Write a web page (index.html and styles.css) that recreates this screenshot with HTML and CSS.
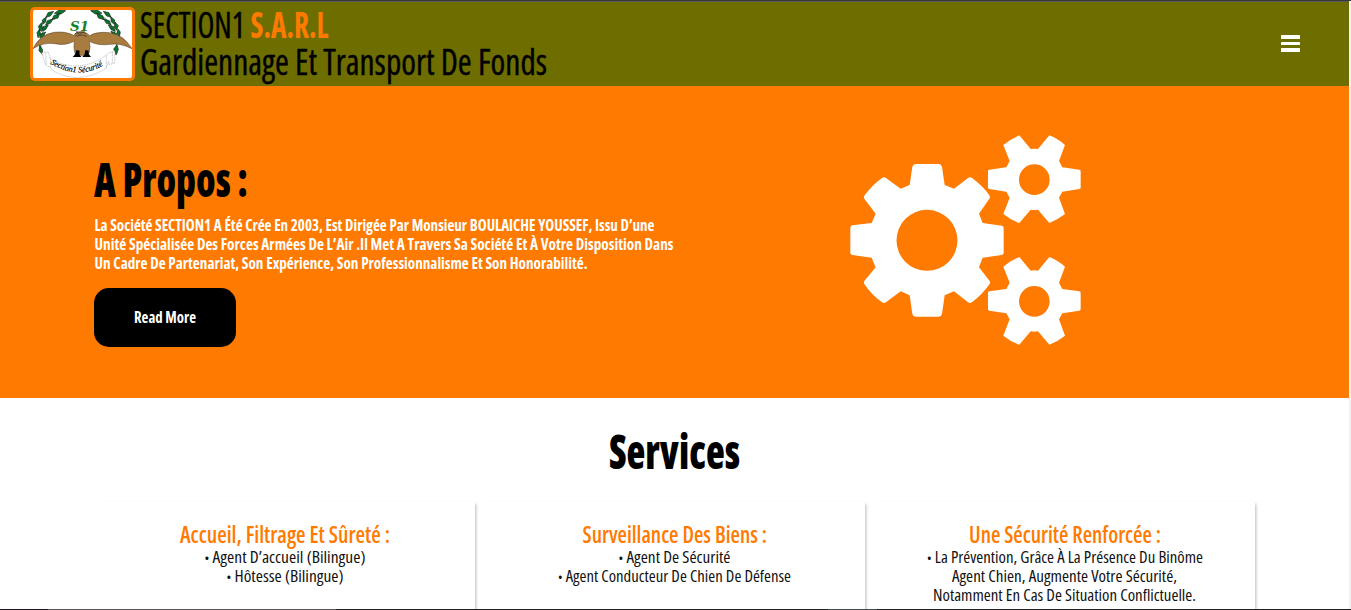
FILE: index.html
```html
<!DOCTYPE html>
<html lang="fr">
<head>
<meta charset="utf-8">
<title>Section1 S.A.R.L</title>
<link rel="stylesheet" href="styles.css">
</head>
<body>
<div class="page">
  <header class="header">
    <div class="brand">
      <svg class="logo" viewBox="24 30 297 204" preserveAspectRatio="none">
        <g class="laurel">
          <path d="M120 33Q62 55 48 112Q44 140 52 164M199 33Q254 50 269 98Q279 130 272 164"/>
        </g>
        <g class="leaves">
          <path d="M122 32l-20-2-14 10 20 2zM104 40l-5 14-17 5 4-12zM86 34l-10 14-13 4 6-14zM84 57l-8 13-14 5 5-13zM64 50l-2 16-9 7-1-13zM70 75l-8 14-13 5 5-14zM50 68l2 16-7 9-5-14zM62 96l-6 13-12 4 4-12zM43 88l4 15-8 10-3-15zM44 136l8 12 2 17-12-13z"/>
          <path d="M197 32l20-2 14 10-20 2zM215 40l5 14 17 5-4-12zM235 34l10 14 13 4-6-14zM236 57l8 13 14 5-5-13zM257 50l2 16 9 7 1-13zM250 75l8 14 13 5-5-14zM270 66l-2 16 7 9 5-14zM258 94l6 13 12 4-4-12zM279 87l-4 14 8 10 3-15zM276 134l-10 13 8 17 6-16z"/>
        </g>
        <text class="logo-mark" x="135" y="94" textLength="57" lengthAdjust="spacingAndGlyphs">S1</text>
        <path class="eagle" d="M24 146Q45 103 88 97Q125 93 147 107L153 99Q170 91 184 99L194 107Q215 94 253 98Q295 103 321 146Q285 128 256 133Q218 138 193 124L195 140Q194 160 188 166H152Q146 150 147 138L148 124Q120 138 90 131Q55 126 24 146Z"/>
        <path class="crest" d="M147 104l8-6 10 5 8-7 10 6M158 100l-4-5 18 2 8-4M151 108l20-3 14 4"/>
        <path class="claws" d="M154 150l10 2-1 11 6 8h-26l8-9zM181 150l10 2v10l7 9h-26l7-8z"/>
        <path class="ribbon" d="M50 158L70 156 76 176Q160 224 241 167L253 158 270 153 269 190 252 193 251 184 244 204Q164 256 85 213L77 203 62 195ZM76 176L77 203M244 166L244 204M62 160L64 195M262 156L262 191"/>
        <path id="ribbon-curve" class="guide" d="M76 190Q163 246 246 189"/>
        <text class="logo-name"><textPath href="#ribbon-curve" textLength="168" lengthAdjust="spacingAndGlyphs">Section1 Sécurité</textPath></text>
      </svg>
      <div class="brand-text">
        <svg class="line brand-line"><text x="-1" y="30.500" textLength="105" lengthAdjust="spacingAndGlyphs">SECTION1</text><text class="accent" x="109.500" y="30.500" textLength="78" lengthAdjust="spacingAndGlyphs">S.A.R.L</text></svg>
        <svg class="line brand-line"><text x="-1" y="30.500" textLength="407" lengthAdjust="spacingAndGlyphs">Gardiennage Et Transport De Fonds</text></svg>
      </div>
    </div>
    <div class="menu"><span></span><span></span><span></span></div>
  </header>

  <section class="hero">
    <div class="about">
      <svg class="line heading"><text x="0" y="41" textLength="154" lengthAdjust="spacingAndGlyphs">A Propos :</text></svg>
      <div class="about-text">
        <svg class="line body-line"><text x="0.500" y="15" textLength="560" lengthAdjust="spacingAndGlyphs">La Société SECTION1 A Été Crée En 2003, Est Dirigée Par Monsieur BOULAICHE YOUSSEF, Issu D’une</text></svg>
        <svg class="line body-line"><text x="0.500" y="15" textLength="579" lengthAdjust="spacingAndGlyphs">Unité Spécialisée Des Forces Armées De L’Air .Il Met A Travers Sa Société Et À Votre Disposition Dans</text></svg>
        <svg class="line body-line"><text x="0.500" y="15" textLength="493" lengthAdjust="spacingAndGlyphs">Un Cadre De Partenariat, Son Expérience, Son Professionnalisme Et Son Honorabilité.</text></svg>
      </div>
      <div class="button"><svg class="line button-label"><text x="0" y="15" textLength="62" lengthAdjust="spacingAndGlyphs">Read More</text></svg></div>
    </div>
    <svg class="gears" viewBox="0 0 750 690">
      <path fill-rule="evenodd" d="M209 180L217 125Q219 117 227 117H296Q304 117 306 125L314 180 342 191 384 159Q390 155 396 159Q430 184 449 212Q451 216 448 221L417 266 428 294 485 302Q491 303 491 308V385Q491 389 485 390L428 398 417 427 449 468Q452 472 449 477Q427 508 396 532Q390 536 384 532L342 499 314 511 306 567Q304 575 296 575H227Q219 575 217 567L209 511 182 499 138 532Q132 536 126 532Q94 509 73 477Q70 473 73 468L107 427 95 398 37 390Q31 389 31 384V309Q31 303 37 301L95 294 107 266 73 221Q70 217 73 212Q97 180 126 159Q132 155 138 159L182 191ZM261 254.500A91.500 91.500 0 0 0 261 437.500A91.500 91.500 0 0 0 261 254.500Z"/>
      <path id="small-gear" fill-rule="evenodd" d="M444 138Q444 135 448 134L499 127 509 108 490 60Q512 42 538 31L572 72Q583 70 594 72L628 31Q652 40 675 60L657 108 667 127 718 134Q722 135 722 138V188Q722 191 718 192L667 200 657 218 675 267Q652 285 628 294L594 254Q583 256 572 254L538 294Q512 285 490 267L509 218 499 200 448 192Q444 191 444 188ZM583 118A46 46 0 0 0 583 210A46 46 0 0 0 583 118Z"/>
      <use href="#small-gear" y="365"/>
    </svg>
  </section>

  <section class="services">
    <svg class="line services-title"><text x="0" y="41.500" textLength="131" lengthAdjust="spacingAndGlyphs">Services</text></svg>
    <div class="cards">
      <div class="card">
        <svg class="line card-title"><text x="85" y="24" textLength="210" lengthAdjust="spacingAndGlyphs">Accueil, Filtrage Et Sûreté :</text></svg>
        <svg class="line item"><text x="109.500" y="15" textLength="161" lengthAdjust="spacingAndGlyphs"><tspan class="bullet">•</tspan> Agent D’accueil (Bilingue)</text></svg>
        <svg class="line item"><text x="131.500" y="15" textLength="117" lengthAdjust="spacingAndGlyphs"><tspan class="bullet">•</tspan> Hôtesse (Bilingue)</text></svg>
      </div>
      <div class="card">
        <svg class="line card-title"><text x="97.500" y="24" textLength="184.500" lengthAdjust="spacingAndGlyphs">Surveillance Des Biens :</text></svg>
        <svg class="line item"><text x="133.500" y="15" textLength="112" lengthAdjust="spacingAndGlyphs"><tspan class="bullet">•</tspan> Agent De Sécurité</text></svg>
        <svg class="line item"><text x="73" y="15" textLength="233" lengthAdjust="spacingAndGlyphs"><tspan class="bullet">•</tspan> Agent Conducteur De Chien De Défense</text></svg>
      </div>
      <div class="card">
        <svg class="line card-title"><text x="94" y="24" textLength="192" lengthAdjust="spacingAndGlyphs">Une Sécurité Renforcée :</text></svg>
        <svg class="line item"><text x="52" y="15" textLength="276" lengthAdjust="spacingAndGlyphs"><tspan class="bullet">•</tspan> La Prévention, Grâce À La Présence Du Binôme</text></svg>
        <svg class="line item"><text x="77" y="15" textLength="225" lengthAdjust="spacingAndGlyphs">Agent Chien, Augmente Votre Sécurité,</text></svg>
        <svg class="line item"><text x="58" y="15" textLength="263" lengthAdjust="spacingAndGlyphs">Notamment En Cas De Situation Conflictuelle.</text></svg>
      </div>
    </div>
  </section>
  <div class="bottom-edge"></div>
</div>
</body>
</html>
```
FILE: styles.css
```css
* { box-sizing: border-box; }
body {
  margin: 0;
  background: #f1f1f1;
  font-family: "Open Sans", "Noto Sans", sans-serif;
  font-stretch: 75%;
  overflow: hidden;
}
.page {
  display: flex;
  flex-direction: column;
  height: 610px;
  border-top: 1px solid #383838;
  overflow: hidden;
}
.line { display: block; overflow: visible; flex: none; }
.header {
  display: flex;
  justify-content: space-between;
  width: 1349px;
  height: 85px;
  flex: none;
  padding: 5px 49.500px 0 30px;
  background: #6e6e00;
  border-top: 1px solid #585858;
}
.brand { display: flex; gap: 6px; }
.logo {
  width: 105px;
  height: 74px;
  background: #fff;
  border: 3px solid #ff7a00;
  border-radius: 5px;
}
.laurel { fill: none; stroke: #174b25; stroke-width: 2; }
.leaves { fill: #08752c; stroke: #152b1b; stroke-width: 2; }
.logo-mark { font: italic bold 39px "DejaVu Serif", serif; fill: #128026; }
.eagle { fill: #a87b3f; stroke: #4c371d; stroke-width: 1.500; }
.crest { fill: none; stroke: #333; stroke-width: 2; }
.claws { fill: #000; }
.ribbon { fill: #fff; stroke: #999; stroke-width: 1.500; stroke-dasharray: 5 2; }
.guide { fill: none; }
.logo-name { font: italic 25px "Liberation Serif", serif; fill: #000; stroke: #000; stroke-width: .5; }
.brand-line { width: 406px; height: 37px; font-size: 35.500px; font-weight: 500; stroke: #000; stroke-width: .4; }
.accent { fill: #ff7a00; stroke: none; font-weight: 700; }
.menu { display: flex; flex-direction: column; gap: 3px; padding-top: 28.400px; }
.menu span { width: 18.500px; height: 3.500px; border-radius: .5px; background: #fff; }
.hero {
  display: flex;
  gap: 166px;
  width: 1349px;
  height: 312px;
  flex: none;
  padding: 39px 0 0 94px;
  background: #ff7a00;
}
.about { width: 590px; padding-top: 31px; }
.heading { width: 153px; height: 60px; font-size: 48.500px; font-weight: 800; }
.body-line { width: 580px; height: 19px; font-size: 16.500px; font-weight: 700; fill: #fff; }
.button {
  display: flex;
  align-items: center;
  justify-content: center;
  width: 142px;
  height: 59px;
  margin-top: 15px;
  border-radius: 15px;
  background: #000;
}
.button-label { width: 62px; height: 19px; font-size: 16.500px; font-weight: 700; fill: #fff; }
.gears { width: 250px; height: 230px; margin-left: -10px; fill: #fff; }
.services {
  display: flex;
  flex-direction: column;
  align-items: center;
  width: 1349px;
  height: 211px;
  flex: none;
  padding-top: 29px;
  background: #fff;
  overflow: hidden;
}
.services-title { width: 131px; height: 75px; font-size: 47.500px; font-weight: 800; }
.cards { display: flex; gap: 10px; }
.card { width: 380px; height: 130px; padding-top: 17px; box-shadow: 2px 1px 3px -1px #bbb; }
.card-title { width: 380px; height: 29px; font-size: 24px; font-weight: 600; fill: #ff7a00; }
.item { width: 380px; height: 19px; font-size: 16.500px; font-weight: 500; fill: #111; }
.bullet { font-size: 12px; }
.bottom-edge {
  height: 1px;
  flex: none;
  background: linear-gradient(90deg, #1f1a22 48px, #5a5858 48px 336px, #222 336px 828px, #454a4a 828px 877px, #222 877px);
}
```
